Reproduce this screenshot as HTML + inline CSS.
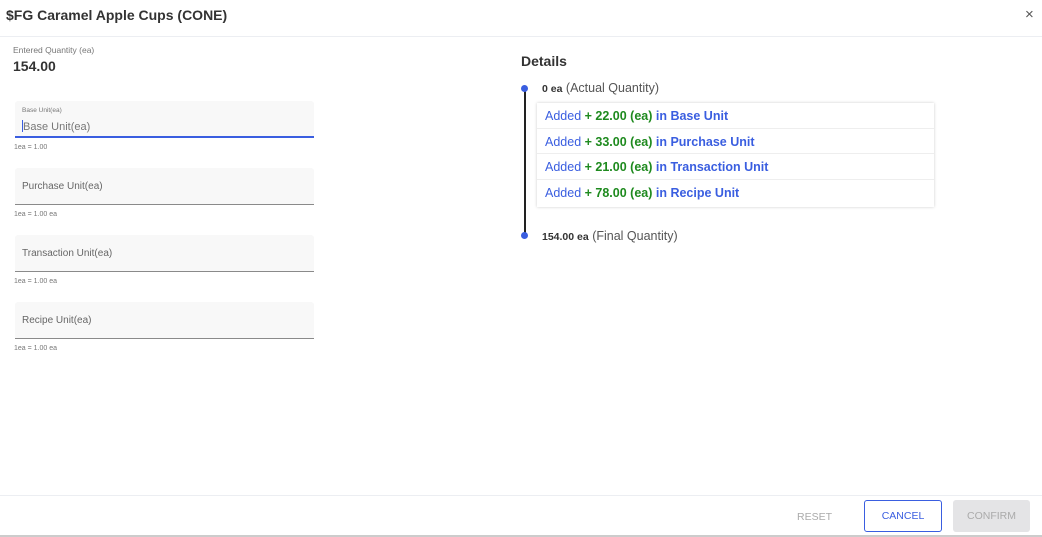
<!DOCTYPE html>
<html><head><style>
*{margin:0;padding:0;box-sizing:border-box}
body{width:1042px;height:537px;background:#fff;font-family:"Liberation Sans",sans-serif;position:relative;overflow:hidden;color:#333}
.a{position:absolute}
.field{position:absolute;left:15px;width:299px;height:37px;background:#f8f8f8;border-bottom:1px solid #8a8a8a;border-radius:3px 3px 0 0}
.field span{position:absolute;left:7px;top:17px;font-size:10px;color:#666}
.hint{position:absolute;left:14px;font-size:7px;color:#777}
.row{height:25.5px;line-height:27px;padding-left:8px;font-size:12.5px;color:#3a5ee0;border-bottom:1px solid #eee}
.row b{color:#1e8a1e;font-weight:bold}
.row i{font-style:normal;font-weight:bold;color:#3a5ee0}
.dot{position:absolute;left:521px;width:7px;height:7px;border-radius:50%;background:#3a5ee0}
</style></head><body>
<div class="a" style="left:6px;top:7px;font-size:14px;font-weight:bold;color:#333">$FG Caramel Apple Cups (CONE)</div>
<div class="a" style="left:1025px;top:6px;font-size:15px;color:#555">×</div>
<div class="a" style="left:0;top:36px;width:1042px;height:1px;background:#eceef2"></div>
<div class="a" style="left:13px;top:45px;font-size:8.5px;color:#777">Entered Quantity (ea)</div>
<div class="a" style="left:13px;top:58px;font-size:14px;font-weight:bold;color:#333">154.00</div>

<div class="field" style="top:101px"><div style="position:absolute;left:7px;top:6px;font-size:6.5px;color:#777">Base Unit(ea)</div><span style="top:19px;font-size:11px;color:#777"><span style="position:static;display:inline-block;width:1px;height:12px;background:#3a5ee0;vertical-align:-2px"></span>Base Unit(ea)</span><div style="position:absolute;left:0;right:0;bottom:-1px;height:2px;background:#3a5ee0"></div></div>
<div class="hint" style="top:144px">1ea = 1.00</div>
<div class="field" style="top:168px"><span style="top:13px">Purchase Unit(ea)</span></div>
<div class="hint" style="top:211px">1ea = 1.00 ea</div>
<div class="field" style="top:235px"><span style="top:13px">Transaction Unit(ea)</span></div>
<div class="hint" style="top:278px">1ea = 1.00 ea</div>
<div class="field" style="top:302px"><span style="top:13px">Recipe Unit(ea)</span></div>
<div class="hint" style="top:345px">1ea = 1.00 ea</div>

<div class="a" style="left:521px;top:53px;font-size:14px;font-weight:bold;color:#333">Details</div>
<div class="a" style="left:524px;top:88px;width:2px;height:148px;background:#222"></div>
<div class="dot" style="top:85px"></div>
<div class="dot" style="top:232px"></div>
<div class="a" style="left:542px;top:81px;font-size:12.5px;color:#555"><b style="font-size:10.5px;color:#333">0 ea</b> (Actual Quantity)</div>
<div class="a" style="left:537px;top:103px;width:397px;height:104px;background:#fff;box-shadow:0 0 3px rgba(0,0,0,.2)">
<div class="row">Added <b>+ 22.00 (ea)</b> <i>in Base Unit</i></div>
<div class="row">Added <b>+ 33.00 (ea)</b> <i>in Purchase Unit</i></div>
<div class="row">Added <b>+ 21.00 (ea)</b> <i>in Transaction Unit</i></div>
<div class="row" style="border:0">Added <b>+ 78.00 (ea)</b> <i>in Recipe Unit</i></div>
</div>
<div class="a" style="left:542px;top:229px;font-size:12.5px;color:#555"><b style="font-size:10.5px;color:#333">154.00 ea</b> (Final Quantity)</div>

<div class="a" style="left:0;top:495px;width:1042px;height:1px;background:#eceef2"></div>
<div class="a" style="left:0;top:535px;width:1042px;height:2px;background:#ccc"></div>
<div class="a" style="left:797px;top:511px;font-size:10.5px;color:#aaa">RESET</div>
<div class="a" style="left:864px;top:500px;width:78px;height:32px;border:1.5px solid #3a5ee0;border-radius:3px;color:#3a5ee0;font-size:10.5px;text-align:center;line-height:31px">CANCEL</div>
<div class="a" style="left:953px;top:500px;width:77px;height:32px;background:#e4e4e6;border-radius:3px;color:#aaa;font-size:10.5px;text-align:center;line-height:32px">CONFIRM</div>
</body></html>
